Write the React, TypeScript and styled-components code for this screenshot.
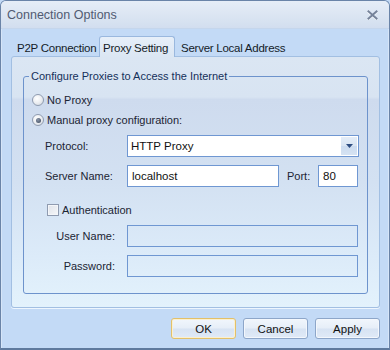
import React from "react";
import styled, { createGlobalStyle } from "styled-components";

const Global = createGlobalStyle`
  html, body { margin: 0; padding: 0; width: 390px; height: 350px; overflow: hidden; background: #c3daf6; }
  #root { width: 390px; height: 350px; }
  * { box-sizing: border-box; }
`;

const FONT = `"Liberation Sans", Arial, sans-serif`;

const Window = styled.div`
  width: 390px;
  height: 350px;
  display: flex;
  flex-direction: column;
  border: 1px solid #6a84a8;
  border-bottom: 2px solid #5f7a9e;
  border-radius: 6px 6px 0 0;
  background: #c3daf6;
  font-family: ${FONT};
  font-size: 11px;
  color: #1b2433;
  overflow: hidden;
`;

const TitleBar = styled.div`
  height: 28px;
  flex: none;
  display: flex;
  align-items: center;
  justify-content: space-between;
  padding: 0 11px 0 6px;
  background: linear-gradient(#e6edf7 0%, #dbe5f2 55%, #d2deef 100%);
  border-bottom: 1px solid #c5d6ec;
`;

const Title = styled.span`
  font-size: 12.5px;
  color: #515b72;
  padding-top: 1px;
`;

const Body = styled.div`
  flex: 1;
  display: flex;
  flex-direction: column;
  padding: 7px 9px 0 10px;
  box-shadow: inset 1px 0 0 #d6e5f8, inset -1px 0 0 #d6e5f8;
`;

const TabRow = styled.div`
  display: flex;
  align-items: flex-end;
  height: 20px;
  position: relative;
  z-index: 1;
`;

const Tab = styled.div<{ $active?: boolean; $w?: number }>`
  white-space: nowrap;
  display: flex;
  align-items: center;
  width: ${(p) => (p.$w ? `${p.$w}px` : "auto")};
  padding: 0 ${(p) => (p.$active ? 3 : 5)}px;
  font-size: 11.5px;
  letter-spacing: -0.25px;
  color: #141c28;
  border: 1px solid ${(p) => (p.$active ? "#9ab8de" : "transparent")};
  border-bottom: none;
  border-radius: 3px 3px 0 0;
  background: ${(p) => (p.$active ? "linear-gradient(#e7eff9, #dbe6f3)" : "transparent")};
  margin-bottom: ${(p) => (p.$active ? -1 : 0)}px;
  height: ${(p) => (p.$active ? 21 : 19)}px;
  padding-top: 1px;
`;

const Panel = styled.div`
  height: 252px;
  border: 1px solid #a2bfe2;
  border-radius: 3px;
  background: linear-gradient(
    #dbe6f3 0%,
    #d8e4f2 16%,
    #cedbee 17%,
    #d3e1f2 50%,
    #dcebf9 80%,
    #e3f2fc 100%
  );
  padding: 13px 11px 13px 11px;
  box-shadow: 0 1px 0 #eef6fe;
`;

const Group = styled.fieldset`
  margin: 0;
  height: 224px;
  padding: 0 8px 0 8px;
  border: 1px solid #6d93cc;
  border-radius: 3px;
  display: flex;
  flex-direction: column;
`;

const Legend = styled.legend`
  margin-left: -3px;
  padding: 0 2px;
  font-size: 11px;
  line-height: 13px;
  color: #15305a;
`;

const RadioRow = styled.div<{ $mt?: number }>`
  height: 20px;
  display: flex;
  align-items: center;
  gap: 3px;
  margin-top: ${(p) => p.$mt ?? 0}px;
`;

const RadioCircle = styled.span`
  width: 12px;
  height: 12px;
  border-radius: 50%;
  border: 1px solid #8f9bb0;
  background: radial-gradient(circle at 40% 35%, #ffffff 0%, #eef0f3 45%, #cfd5de 100%);
  display: flex;
  align-items: center;
  justify-content: center;
`;

const RadioDot = styled.span`
  width: 5px;
  height: 5px;
  border-radius: 50%;
  background: radial-gradient(circle at 40% 35%, #8a96aa, #3c475a);
`;

const FieldRow = styled.div<{ $mt?: number; $mr?: number }>`
  display: grid;
  grid-template-columns: 82px 1fr;
  align-items: center;
  height: 22px;
  margin-left: 13px;
  margin-right: ${(p) => p.$mr ?? 1}px;
  margin-top: ${(p) => p.$mt ?? 0}px;
`;

const Label = styled.span<{ $right?: boolean }>`
  text-align: ${(p) => (p.$right ? "right" : "left")};
  padding-right: ${(p) => (p.$right ? 12 : 0)}px;
`;

const TextBox = styled.div<{ $disabled?: boolean; $w?: number }>`
  height: 22px;
  width: ${(p) => (p.$w ? `${p.$w}px` : "auto")};
  border: 1px solid #6f97d2;
  background: ${(p) => (p.$disabled ? "transparent" : "#ffffff")};
  display: flex;
  align-items: center;
  padding-left: 4px;
  font-size: 11.5px;
  color: #111;
`;

const SelectBox = styled.div`
  height: 22px;
  border: 1px solid #6f97d2;
  background: #ffffff;
  display: flex;
  align-items: stretch;
  font-size: 11.5px;
  color: #111;
`;

const SelectText = styled.span`
  flex: 1;
  display: flex;
  align-items: center;
  padding-left: 3px;
`;

const DropButton = styled.span`
  width: 16px;
  margin: 1px;
  background: linear-gradient(#e4edf8 0%, #d9e5f3 50%, #cbdbef 51%, #d6e3f3 100%);
  display: flex;
  align-items: center;
  justify-content: center;
`;

const ServerInputs = styled.div`
  display: flex;
  align-items: center;
`;

const PortLabel = styled.span`
  margin-left: 8px;
  flex: 1;
`;

const CheckRow = styled.div`
  display: flex;
  align-items: center;
  gap: 3px;
  height: 20px;
  margin-left: 15px;
  margin-top: 13px;
`;

const CheckBox = styled.span`
  width: 12px;
  height: 12px;
  border: 1px solid #8f9bb0;
  background: linear-gradient(135deg, #dfe3ea 0%, #f6f7f9 100%);
  box-shadow: inset 0 0 0 1px #f4f6f9;
`;

const ButtonRow = styled.div`
  display: flex;
  justify-content: flex-end;
  gap: 7px;
  margin-top: 10px;
`;

const Button = styled.div<{ $default?: boolean }>`
  width: 65px;
  height: 21px;
  border-radius: 3px;
  border: 1px solid ${(p) => (p.$default ? "#e2c06a" : "#8da6c9")};
  background: linear-gradient(#f1f6fc 0%, #e6eef8 48%, #d7e3f3 52%, #e0eaf7 100%);
  box-shadow: inset 0 0 0 1px ${(p) => (p.$default ? "#fbf0cf" : "#f3f7fc")};
  display: flex;
  align-items: center;
  justify-content: center;
  font-size: 11.5px;
  color: #111;
`;

const CloseIcon = () => (
  <svg width="11" height="10" viewBox="0 0 11 10">
    <path d="M1.5 1.5 L9.5 8.5 M9.5 1.5 L1.5 8.5" stroke="#ffffff" strokeWidth="2" transform="translate(0 0.8)" strokeLinecap="square" opacity="0.8" />
    <path d="M1.5 1.5 L9.5 8.5 M9.5 1.5 L1.5 8.5" stroke="#76839a" strokeWidth="2" strokeLinecap="square" />
  </svg>
);

const Triangle = () => (
  <svg width="7" height="4" viewBox="0 0 7 4">
    <path d="M0 0 H7 L3.5 4 Z" fill="#2d4c80" />
  </svg>
);

export default function App() {
  return (
    <>
      <Global />
      <Window>
        <TitleBar>
          <Title>Connection Options</Title>
          <CloseIcon />
        </TitleBar>
        <Body>
          <TabRow>
            <Tab $w={88}>P2P Connection</Tab>
            <Tab $active $w={76}>Proxy Setting</Tab>
            <Tab>Server Local Address</Tab>
          </TabRow>
          <Panel>
            <Group>
              <Legend>Configure Proxies to Access the Internet</Legend>
              <RadioRow $mt={7}>
                <RadioCircle />
                No Proxy
              </RadioRow>
              <RadioRow>
                <RadioCircle>
                  <RadioDot />
                </RadioCircle>
                Manual proxy configuration:
              </RadioRow>
              <FieldRow $mt={5} $mr={0}>
                <Label>Protocol:</Label>
                <SelectBox>
                  <SelectText>HTTP Proxy</SelectText>
                  <DropButton>
                    <Triangle />
                  </DropButton>
                </SelectBox>
              </FieldRow>
              <FieldRow $mt={8}>
                <Label>Server Name:</Label>
                <ServerInputs>
                  <TextBox $w={152}>localhost</TextBox>
                  <PortLabel>Port:</PortLabel>
                  <TextBox $w={40}>80</TextBox>
                </ServerInputs>
              </FieldRow>
              <CheckRow>
                <CheckBox />
                Authentication
              </CheckRow>
              <FieldRow $mt={5}>
                <Label $right>User Name:</Label>
                <TextBox $disabled />
              </FieldRow>
              <FieldRow $mt={8}>
                <Label $right>Password:</Label>
                <TextBox $disabled />
              </FieldRow>
            </Group>
          </Panel>
          <ButtonRow>
            <Button $default>OK</Button>
            <Button>Cancel</Button>
            <Button>Apply</Button>
          </ButtonRow>
        </Body>
      </Window>
    </>
  );
}
